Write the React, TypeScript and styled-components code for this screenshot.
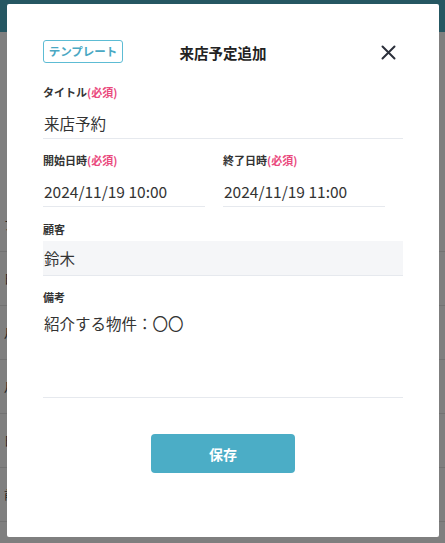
import React from "react";
import styled, { createGlobalStyle } from "styled-components";

const GlobalStyle = createGlobalStyle`
  html, body { margin: 0; padding: 0; }
  body {
    font-family: "Noto Sans CJK JP", "Noto Sans", sans-serif;
    color: #333;
    background: #fff;
  }
  * { box-sizing: border-box; }
`;

const Page = styled.div`
  width: 445px;
  height: 543px;
  overflow: hidden;
  position: relative;
  background: #fff;
`;

const TopBar = styled.div`
  height: 32px;
  background: #4aafc5;
`;

const Table = styled.div`
  display: flex;
  flex-direction: column;
  padding-top: 166px;
`;

const Row = styled.div`
  height: 54px;
  border-bottom: 1px solid #e4e4e4;
  display: flex;
  align-items: center;
  font-size: 12px;
  color: #444;
`;

const Cell = styled.div<{ $w: number }>`
  width: ${(p) => p.$w}px;
  padding-left: 4px;
  white-space: nowrap;
  overflow: hidden;
`;

const Overlay = styled.div`
  position: absolute;
  inset: 0;
  background: rgba(0, 0, 0, 0.5);
  display: flex;
  justify-content: center;
  align-items: flex-start;
  padding: 4px 6px 0 7px;
`;

const Modal = styled.div`
  width: 432px;
  height: 533px;
  background: #fff;
  border-radius: 2px;
  padding: 36px 36px 0 36px;
  display: flex;
  flex-direction: column;
`;

const Header = styled.div`
  display: grid;
  grid-template-columns: 1fr auto 1fr;
  align-items: center;
  height: 23px;
  margin-bottom: 21px;
`;

const TemplateButton = styled.button`
  justify-self: start;
  height: 23px;
  width: 80px;
  padding: 0;
  border: 1px solid #5dbcd4;
  border-radius: 3px;
  background: #fff;
  color: #4aa8c3;
  font-family: inherit;
  font-size: 11.5px;
  font-weight: 700;
  line-height: 1;
`;

const Title = styled.h2`
  margin: 0;
  font-size: 14.5px;
  font-weight: 700;
  color: #222;
  padding-top: 2px;
`;

const CloseButton = styled.button`
  justify-self: end;
  margin-right: 6px;
  width: 18px;
  height: 18px;
  padding: 0;
  border: none;
  background: none;
  display: flex;
  align-items: center;
  justify-content: center;
  margin-top: 1px;
`;

const Field = styled.div<{ $mb?: number }>`
  display: flex;
  flex-direction: column;
  margin-bottom: ${(p) => p.$mb ?? 13}px;
`;

const Label = styled.div<{ $gap?: number }>`
  font-size: 11px;
  font-weight: 700;
  line-height: 16px;
  color: #333;
  margin-bottom: ${(p) => p.$gap ?? 7}px;
`;

const Req = styled.span`
  color: #ea4a7e;
`;

const Value = styled.div<{ $filled?: boolean; $h?: number; $multi?: boolean }>`
  height: ${(p) => p.$h ?? 32}px;
  display: flex;
  align-items: ${(p) => (p.$multi ? "flex-start" : "center")};
  font-size: 15.5px;
  color: #333;
  padding-left: 1px;
  padding-top: ${(p) => (p.$multi ? 5 : 0)}px;
  border-bottom: 1px solid #e6e9ee;
  background: ${(p) => (p.$filled ? "#f5f6f8" : "transparent")};
`;

const TwoCols = styled.div`
  display: grid;
  grid-template-columns: 162px 162px;
  column-gap: 18px;
`;

const Footer = styled.div`
  display: flex;
  justify-content: center;
  margin-top: 36px;
`;

const SaveButton = styled.button`
  width: 144px;
  height: 39px;
  border: none;
  border-radius: 4px;
  background: #4badc6;
  color: #fff;
  font-family: inherit;
  font-size: 14px;
  font-weight: 700;
`;

const bgRows = [
  ["ア", ""],
  ["日", ""],
  ["月", ""],
  ["月", ""],
  ["日", ""],
  ["前", ""],
  ["", "Nakamu", "一斉"],
];

export default function App() {
  return (
    <Page>
      <GlobalStyle />
      <TopBar />
      <Table>
        {bgRows.map((r, i) => (
          <Row key={i}>
            <Cell $w={104}>{r[0]}</Cell>
            <Cell $w={80}>{r[1]}</Cell>
            <Cell $w={60}>{r[2] ?? ""}</Cell>
          </Row>
        ))}
      </Table>
      <Overlay>
        <Modal>
          <Header>
            <TemplateButton>テンプレート</TemplateButton>
            <Title>来店予定追加</Title>
            <CloseButton aria-label="閉じる">
              <svg width="15" height="15" viewBox="0 0 15 15">
                <path
                  d="M1.5 1.5 L13.5 13.5 M13.5 1.5 L1.5 13.5"
                  stroke="#2b2f3a"
                  strokeWidth="2"
                  strokeLinecap="round"
                />
              </svg>
            </CloseButton>
          </Header>

          <Field>
            <Label>
              タイトル<Req>(必須)</Req>
            </Label>
            <Value>来店予約</Value>
          </Field>

          <TwoCols>
            <Field $mb={14}>
              <Label>
                開始日時<Req>(必須)</Req>
              </Label>
              <Value>2024/11/19 10:00</Value>
            </Field>
            <Field $mb={14}>
              <Label>
                終了日時<Req>(必須)</Req>
              </Label>
              <Value>2024/11/19 11:00</Value>
            </Field>
          </TwoCols>

          <Field>
            <Label $gap={4}>顧客</Label>
            <Value $filled $h={35}>
              鈴木
            </Value>
          </Field>

          <Field $mb={0}>
            <Label $gap={2}>備考</Label>
            <Value $multi $h={91}>
              紹介する物件：〇〇
            </Value>
          </Field>

          <Footer>
            <SaveButton>保存</SaveButton>
          </Footer>
        </Modal>
      </Overlay>
    </Page>
  );
}
